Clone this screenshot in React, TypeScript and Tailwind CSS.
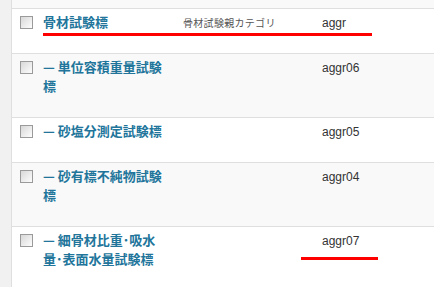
type Row = {
    name: string
    desc: string
    slug: string
    tall: boolean
}

const rows: Row[] = [
    { name: '骨材試験標', desc: '骨材試験親カテゴリ', slug: 'aggr', tall: false },
    { name: '— 単位容積重量試験標', desc: '', slug: 'aggr06', tall: true },
    { name: '— 砂塩分測定試験標', desc: '', slug: 'aggr05', tall: false },
    { name: '— 砂有標不純物試験標', desc: '', slug: 'aggr04', tall: true },
    { name: '— 細骨材比重･吸水量･表面水量試験標', desc: '', slug: 'aggr07', tall: true },
]

function Checkbox() {
    return (
        <div className="w-[13px] h-[13px] border border-[#9a9a9a] bg-gradient-to-br from-[#d8d8d8] to-[#fdfdfd] shrink-0" />
    )
}

export default function App() {
    return (
        <div className="relative w-[434px] h-[287px] overflow-hidden flex bg-white font-['Liberation_Sans','Noto_Sans_CJK_JP',sans-serif]">
            <div className="w-[12px] bg-[#f1f1f1] border-r border-[#dfdfdf] shrink-0" />
            <div className="flex-1 flex flex-col">
                <div className="h-[9px] bg-[#f9f9f9] border-b border-[#dfdfdf] shrink-0" />
                {rows.map((r, i) => (
                    <div
                        key={r.slug}
                        className={`flex shrink-0 border-b border-[#dfdfdf] ${i % 2 === 1 ? 'bg-[#f9f9f9]' : 'bg-white'} ${r.tall ? 'h-[64px]' : 'h-[45px]'}`}
                    >
                        <div className="w-[31px] pl-[8px] pt-[7px] shrink-0">
                            <Checkbox />
                        </div>
                        <div className="w-[140px] shrink-0 pt-[3px]">
                            <div className="w-[126px] text-[13px] leading-[19px] font-bold text-[#21759b] font-['Noto_Sans_CJK_JP',sans-serif]">
                                {r.name}
                            </div>
                        </div>
                        <div className="w-[139px] shrink-0 pt-[5px] text-[10px] leading-[17px] tracking-[0.3px] text-[#555] font-['Noto_Sans_CJK_JP',sans-serif]">
                            {r.desc}
                        </div>
                        <div className="pt-[6px] text-[12px] leading-[16px] text-[#333]">{r.slug}</div>
                    </div>
                ))}
            </div>
            <div className="absolute left-[43px] top-[33px] w-[329px] h-[3px] bg-[#ff0000]" />
            <div className="absolute left-[301px] top-[257px] w-[77px] h-[3px] bg-[#ff0000]" />
        </div>
    )
}
